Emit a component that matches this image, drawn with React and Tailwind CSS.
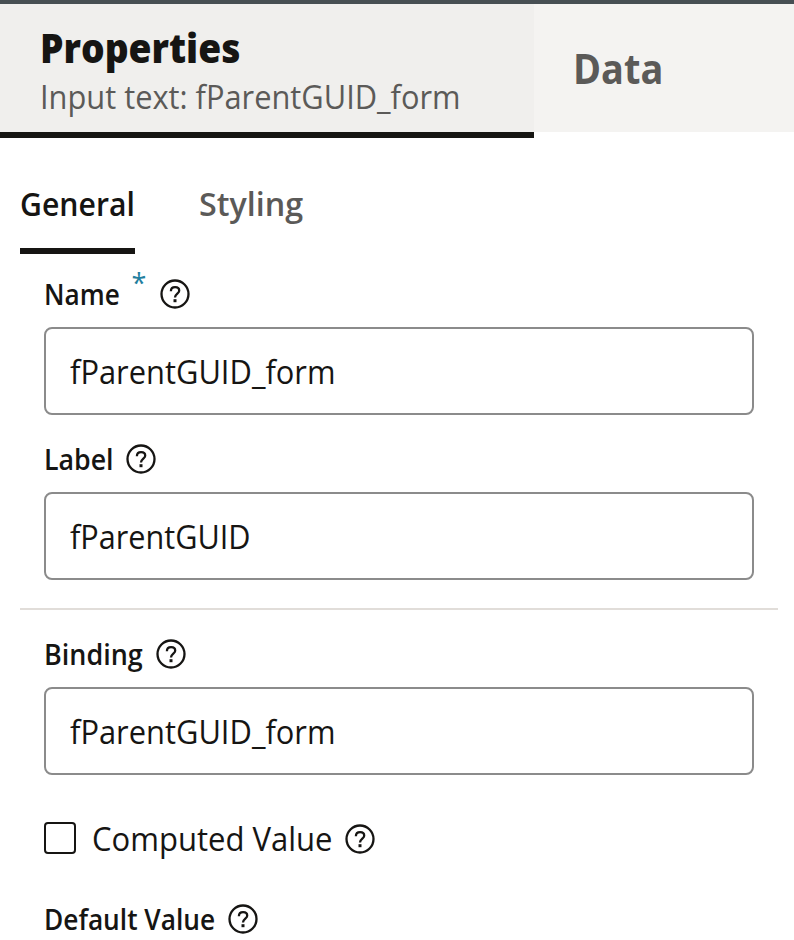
import React from "react";

function HelpIcon() {
  return (
    <svg viewBox="0 0 30 30" className="h-[30px] w-[30px] shrink-0" fill="none" stroke="#161513" strokeWidth="2.3">
      <circle cx="15" cy="15" r="13.5" />
      <path d="M10.9 12.2C10.9 9.7 12.6 8.2 15.1 8.2C17.5 8.2 19.2 9.7 19.2 11.7C19.2 14.5 15 14.8 15 18.5" />
      <path d="M13.5 21.7H16.5" strokeWidth="3" />
    </svg>
  );
}

function FieldLabel({ text, className, scale, required }) {
  return (
    <div className="flex h-11 items-center">
      <span className={`shrink-0 whitespace-nowrap text-[28px] leading-[44px] font-semibold ${className}`}>
        <span className={`inline-block origin-left ${scale}`}>{text}</span>
      </span>
      {required && (
        <span className="-mt-[22px] h-11 w-[28px] shrink-0 text-[27px] leading-[44px] font-medium text-[#227e9e]">*</span>
      )}
      <HelpIcon />
    </div>
  );
}

function TextInput({ value, scale }) {
  return (
    <div className="mt-[11px] flex h-[88px] w-[710px] items-center rounded-[8px] border-2 border-[#8b8b8b] bg-white pt-[2px] pl-6 text-[33px] leading-[44px] font-[450]">
      <span className={`inline-block origin-left ${scale}`}>{value}</span>
    </div>
  );
}

export default function App() {
  return (
    <div className="h-[940px] w-[794px] overflow-hidden bg-white font-['Open_Sans','Noto_Sans',sans-serif] text-[#161513]">
      <header className="flex h-[138px] border-t-4 border-[#474f53]">
        <div className="h-[134px] w-[534px] border-b-[6px] border-[#161613] bg-[#f0efed] pt-[17px] pl-10">
          <div className="h-[52px] w-60 origin-left scale-x-[0.907] text-[41px] leading-[52px] font-extrabold">Properties</div>
          <div className="mt-0.5 h-[44px] w-60 origin-left scale-x-[0.933] text-[33px] leading-[44px] font-[430] whitespace-nowrap text-[#5b5a58]">
            Input text: fParentGUID_form
          </div>
        </div>
        <div className="h-[128px] flex-1 bg-[#f4f3f1] pt-[38px] pl-[39px]">
          <div className="origin-left scale-x-[0.925] text-[41px] leading-[52px] font-bold text-[#5b5a58]">Data</div>
        </div>
      </header>

      <nav className="flex h-[116px] pl-5 text-[33px] leading-[44px] font-semibold">
        <div className="w-[115px] border-b-[6px] border-[#161513] pt-[44px]">
          <div className="origin-left scale-x-[0.915]">General</div>
        </div>
        <div className="ml-[64px] pt-[44px] text-[#5b5a58]">
          <div className="origin-left scale-x-[0.978]">Styling</div>
        </div>
      </nav>

      <main className="pt-[18px] pl-11">
        <FieldLabel text="Name" className="w-[87.5px]" scale="scale-x-[0.935]" required />
        <TextInput value="fParentGUID_form" scale="scale-x-[0.935]" />
        <div className="mt-[22px]">
          <FieldLabel text="Label" className="w-[82px]" scale="scale-x-[0.955]" />
          <TextInput value="fParentGUID" scale="scale-x-[0.928]" />
        </div>
        <div className="mt-[28px] -ml-6 h-0.5 w-[758px] bg-[#e1ddd9]" />
        <div className="mt-[22px]">
          <FieldLabel text="Binding" className="w-[112px]" scale="scale-x-[0.962]" />
          <TextInput value="fParentGUID_form" scale="scale-x-[0.935]" />
        </div>
        <div className="mt-[41px] flex h-11 items-center">
          <span className="h-8 w-8 shrink-0 rounded-[4px] border-2 border-[#161513]" />
          <span className="ml-4 w-[253px] shrink-0 pt-[2px] text-[33px] leading-[44px] font-[430] whitespace-nowrap">
            <span className="inline-block origin-left scale-x-[0.94]">Computed Value</span>
          </span>
          <span className="mt-0.5">
            <HelpIcon />
          </span>
        </div>
        <div className="mt-[37px]">
          <FieldLabel text="Default Value" className="w-[184px]" scale="scale-x-[0.938]" />
        </div>
      </main>
    </div>
  );
}
